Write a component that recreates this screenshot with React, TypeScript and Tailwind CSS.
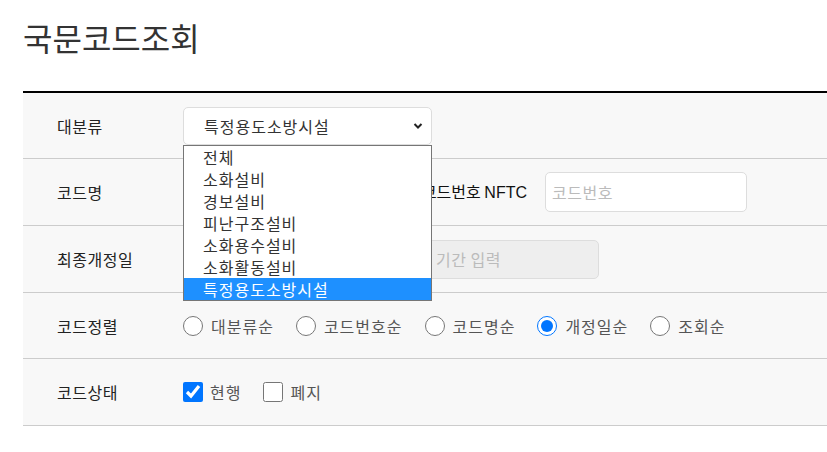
import React from "react";

const font = { fontFamily: '"Noto Sans CJK KR", "Noto Sans", sans-serif' };
const latin = { fontFamily: '"Liberation Sans", "Noto Sans CJK KR", sans-serif' };

function Radio({ label, checked }: { label: string; checked?: boolean }) {
  return (
    <label className="flex items-center">
      <input type="radio" name="sort" defaultChecked={checked} className="m-0 h-5 w-5 accent-[#0075ff]" />
      <span className="ml-2 text-[16px] tracking-[1px] text-[#555]">{label}</span>
    </label>
  );
}

export default function App() {
  const items = ["전체", "소화설비", "경보설비", "피난구조설비", "소화용수설비", "소화활동설비", "특정용도소방시설"];
  return (
    <div className="min-h-[452px] w-[827px] overflow-hidden bg-white" style={font}>
      <div className="pl-[23px]">
        <h1 className="pt-[14px] text-[32px] leading-[46px] font-normal text-[#333]">국문코드조회</h1>
        <div className="mt-[31px] border-t-2 border-black bg-[#f8f8f8] text-[16px] tracking-[0.5px] text-[#222]">
          {/* Row 1 */}
          <div className="relative flex h-[66px] items-center border-b border-[#ccc]">
            <div className="w-[160px] pl-[34px]">대분류</div>
            <div className="relative">
              <div className="flex h-[38px] w-[249px] items-center justify-between rounded-[5px] border border-[#ddd] bg-white pl-[20px] pr-[8px] tracking-[1px] text-[#333]">
                <span>특정용도소방시설</span>
                <svg width="10" height="8" viewBox="0 0 10 8">
                  <path d="M1.5 2 L5 5.5 L8.5 2" fill="none" stroke="#222" strokeWidth="2" />
                </svg>
              </div>
              <div className="absolute left-0 top-[38px] z-10 w-[249px] border border-[#767676] bg-white tracking-[1px]">
                {items.map((it, i) => (
                  <div
                    key={it}
                    className={
                      "h-[22px] pl-[19px] leading-[22px] text-[16px] " +
                      (i === items.length - 1 ? "bg-[#1e90ff] text-white" : "text-[#333]")
                    }
                  >
                    {it}
                  </div>
                ))}
              </div>
            </div>
          </div>
          {/* Row 2 */}
          <div className="flex h-[67px] items-center border-b border-[#ccc]">
            <div className="w-[160px] pl-[34px]">코드명</div>
            <div className="h-[40px] w-[200px] rounded-[5px] border border-[#ddd] bg-white"></div>
            <div className="ml-[20px] w-[124px] text-right tracking-normal text-[#111]">
              코드번호 <span style={latin}>NFTC</span>
            </div>
            <div className="ml-[18px] flex h-[40px] w-[202px] items-center rounded-[5px] border border-[#ddd] bg-white pl-[6px] text-[#bbb]">
              코드번호
            </div>
          </div>
          {/* Row 3 */}
          <div className="flex h-[67px] items-center border-b border-[#ccc]">
            <div className="w-[160px] pl-[34px]">최종개정일</div>
            <div className="flex h-[39px] w-[416px] items-center rounded-[5px] border border-[#ddd] bg-[#eee] pl-[252px] text-[#bbb]">
              기간 입력
            </div>
          </div>
          {/* Row 4 */}
          <div className="flex h-[66px] items-center border-b border-[#ccc]">
            <div className="w-[160px] pl-[34px]">코드정렬</div>
            <div className="flex items-center gap-[22px]">
              <Radio label="대분류순" />
              <Radio label="코드번호순" />
              <Radio label="코드명순" />
              <Radio label="개정일순" checked />
              <Radio label="조회순" />
            </div>
          </div>
          {/* Row 5 */}
          <div className="flex h-[67px] items-center border-b border-[#ccc]">
            <div className="w-[160px] pl-[34px]">코드상태</div>
            <div className="flex items-center gap-[22px]">
              <label className="flex items-center">
                <input type="checkbox" defaultChecked className="m-0 h-5 w-5 accent-[#0075ff]" />
                <span className="ml-[7px] text-[16px] tracking-[1px] text-[#555]">현행</span>
              </label>
              <label className="flex items-center">
                <input type="checkbox" className="m-0 h-5 w-5 accent-[#0075ff]" />
                <span className="ml-[7px] text-[16px] tracking-[1px] text-[#555]">폐지</span>
              </label>
            </div>
          </div>
        </div>
      </div>
    </div>
  );
}
